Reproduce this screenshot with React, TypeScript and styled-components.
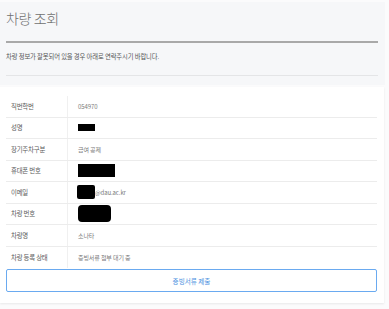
import React from "react";
import styled, { createGlobalStyle } from "styled-components";

const Global = createGlobalStyle`
  html, body { margin: 0; padding: 0; background: #fbfbfc; }
  body { font-family: "Noto Sans CJK KR", "Noto Sans", sans-serif; }
  * { box-sizing: border-box; }
`;

const Page = styled.div`
  width: 389px;
  height: 309px;
  padding-top: 2px;
  background: #fbfbfc;
  overflow: hidden;
`;

const Header = styled.div`
  width: 385px;
  background: #f6f7f9;
  padding: 9px 7px 9px 6px;
  display: flex;
  flex-direction: column;
`;

const Title = styled.h1`
  margin: 0;
  font-size: 14px;
  line-height: 14px;
  font-weight: 300;
  color: #707070;
  letter-spacing: -0.4px;
`;

const ThickRule = styled.div`
  margin-top: 16px;
  height: 2px;
  background: #a9a9a9;
`;

const Subtitle = styled.p`
  margin: 10px 0 0;
  font-size: 6.3px;
  line-height: 8px;
  color: #555;
  letter-spacing: -0.1px;
`;

const ThinRule = styled.div`
  margin-top: 14px;
  height: 1px;
  background: #e4e5e7;
`;

const Card = styled.div`
  margin-top: 2px;
  width: 384px;
  height: 216px;
  background: #fff;
  box-shadow: 0 1px 2px rgba(0, 0, 0, 0.08);
  padding: 9px 7px 0 6px;
  display: flex;
  flex-direction: column;
`;

const Table = styled.div`
  display: flex;
  flex-direction: column;
`;

const Row = styled.div<{ $last?: boolean }>`
  display: grid;
  grid-template-columns: 62px 1fr;
  height: 21.5px;
  border-bottom: ${(p) => (p.$last ? "none" : "1px solid #ececec")};
`;

const Label = styled.div`
  border-right: 1px solid #f0f0f0;
  padding-left: 5px;
  display: flex;
  align-items: center;
  font-size: 6.4px;
  color: #5a5a5a;
  letter-spacing: -0.2px;
`;

const Value = styled.div`
  padding-left: 10px;
  display: flex;
  align-items: center;
  font-size: 6px;
  color: #7a7a7a;
  letter-spacing: -0.1px;
`;

const Redact = styled.span<{ $w: number; $h: number; $r?: number }>`
  display: inline-block;
  width: ${(p) => p.$w}px;
  height: ${(p) => p.$h}px;
  background: #000;
  border-radius: ${(p) => p.$r ?? 0}px;
`;

const Button = styled.button`
  margin-top: 1px;
  height: 23px;
  width: 100%;
  border: 1px solid #6aaaf0;
  border-radius: 2px;
  background: #fff;
  color: #4a8fe0;
  font-family: "Noto Sans CJK KR", "Noto Sans", sans-serif;
  font-size: 6.6px;
  padding: 0;
  cursor: pointer;
`;

const rows: { label: string; value: React.ReactNode }[] = [
  { label: "직번학번", value: "054970" },
  { label: "성명", value: <Redact $w={17} $h={7} /> },
  { label: "장기주차구분", value: "급여 공제" },
  { label: "휴대폰 번호", value: <Redact $w={37} $h={13} /> },
  {
    label: "이메일",
    value: (
      <>
        <Redact $w={18} $h={14} $r={2} style={{ marginLeft: -1 }} />
        <span>@dau.ac.kr</span>
      </>
    ),
  },
  { label: "차량 번호", value: <Redact $w={33} $h={17} $r={4} /> },
  { label: "차량명", value: "소나타" },
  { label: "차량 등록 상태", value: "증빙서류 첨부 대기 중" },
];

export default function App() {
  return (
    <>
      <Global />
      <Page>
        <Header>
          <Title>차량 조회</Title>
          <ThickRule />
          <Subtitle>차량 정보가 잘못되어 있을 경우 아래로 연락주시기 바랍니다.</Subtitle>
          <ThinRule />
        </Header>
        <Card>
          <Table>
            {rows.map((r, i) => (
              <Row key={r.label} $last={i === rows.length - 1}>
                <Label>{r.label}</Label>
                <Value>{r.value}</Value>
              </Row>
            ))}
          </Table>
          <Button>증빙서류 제출</Button>
        </Card>
      </Page>
    </>
  );
}
